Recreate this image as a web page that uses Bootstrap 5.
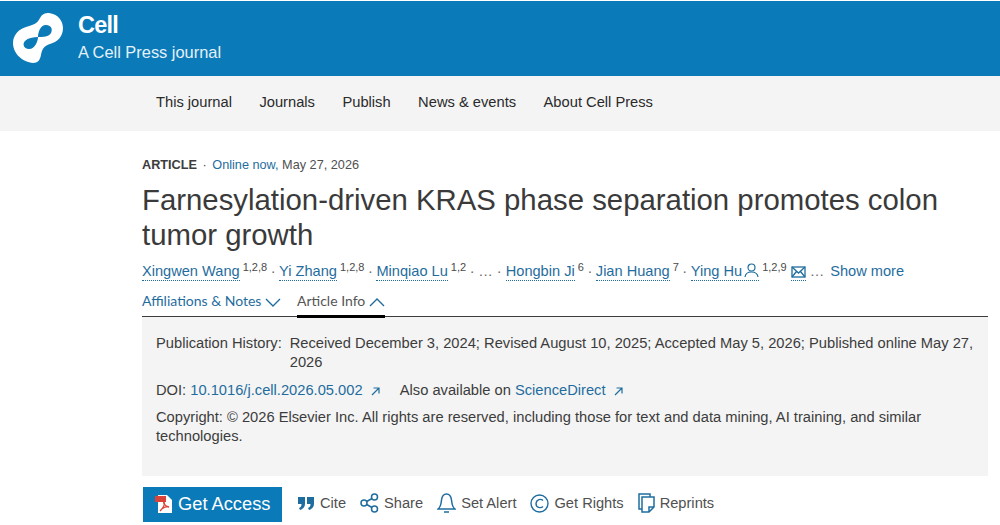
<!DOCTYPE html>
<html lang="en">
<head>
    <meta charset="UTF-8">
    <meta name="viewport" content="width=device-width, initial-scale=1.0">
    <title>Cell</title>
    <link href="https://cdn.jsdelivr.net/npm/bootstrap@5.3.3/dist/css/bootstrap.min.css" rel="stylesheet">
    <style>
        body {
            font-family: "Liberation Sans", Arial, sans-serif;
            color: #3c3c3c;
            overflow: hidden;
        }
        a { text-decoration: none; color: #1f6d9e; }
        .brand-bar {
            margin-top: 1px;
            height: 75px;
            background-color: #0a7ab8;
            color: #fff;
            padding-left: 13px;
            padding-bottom: 3px;
        }
        .brand-logo { width: 50px; height: 50px; margin-right: 15px; margin-top: 2px; }
        .brand-name { font-size: 23.5px; font-weight: 700; line-height: 28px; letter-spacing: -0.8px; margin-top: -2px; }
        .brand-sub { font-size: 16.4px; line-height: 20px; margin-top: 3px; color: #e4f1f8; }
        .site-nav {
            height: 55px;
            background-color: #f4f4f4;
            padding-left: 156px;
            padding-bottom: 3px;
            gap: 27.5px;
            font-size: 14.7px;
        }
        .site-nav a { color: #2a2a2a; }
        .page-main { padding: 26px 12px 0 142px; }
        .meta-line { font-size: 12.7px; line-height: 16px; color: #505050; }
        .meta-line b { color: #3c3c3c; }
        .meta-line a { color: #1f6d9e; }
        .dot-small { margin: 0 2px; }
        .article-title {
            font-size: 29.35px;
            line-height: 35px;
            font-weight: 400;
            margin: 9px 0 0;
            color: #3a3a3a;
        }
        .author-line { font-size: 14.6px; line-height: 20px; margin-top: 9px; color: #6a6a6a; white-space: nowrap; }
        .author-line a.person { border-bottom: 1px dotted #1f6d9e; height: 20px; }
        .author-line sup { font-size: 11px; line-height: 20px; color: #4a4a4a; top: -4px; margin-left: 3px; }
        .dot-sep { width: 12px; text-align: center; }
        .dots-gap { width: 13px; text-align: center; }
        .person-icon { margin-left: 2px; vertical-align: -2px; }
        .show-more { margin-left: 6px; }
        .tab-row { border-bottom: 1px solid #3c3c3c; margin-top: 10px; height: 26px; font-family: Lato, sans-serif; font-size: 14px; gap: 16px; }
        .tab-item { height: 26px; line-height: 20px; }
        .tab-open { color: #555; border-bottom: 3px solid #000; height: 27px; }
        .info-panel { background-color: #f4f4f4; height: 159px; padding: 17px 14px; font-size: 14.7px; line-height: 19px; color: #3c3c3c; }
        .info-panel p { margin: 0; }
        .history-label { flex: 0 0 auto; margin-right: 8px; }
        .doi-line { margin-top: 9px !important; }
        .also-text { margin-left: 16px; }
        .copyright-line { margin-top: 8px !important; }
        .action-row { margin-top: 11px; font-size: 14.65px; color: #505050; }
        .access-btn {
            display: flex;
            align-items: center;
            width: 139px;
            height: 35px;
            margin-left: 1px;
            background-color: #0a7ab8;
            color: #fff;
            font-size: 18.3px;
            padding-left: 11px;
            padding-bottom: 1px;
            gap: 4px;
        }
        .action-group { gap: 14px; margin-left: 15px; padding-bottom: 2px; }
        .action-item { display: flex; align-items: center; gap: 5px; color: #505050; }
    </style>
</head>
<body>
    <header class="brand-bar d-flex align-items-center">
        <svg class="brand-logo" viewBox="0 0 50 50">
            <path fill="#fff" fill-rule="evenodd" d="M36 0C45 1 50 8 50 15C50 24 44 29 37 31C31 33 29 36 28 42C27 47 25 50 20 50C10 49 0 41 0 30C0 22 6 16 13 14C20 12 24 11 27 5C29 1 32 0 36 0ZM25 24C25 20 27 12 33 12C38 12 40 16 38 20C36 24 30 24 25 24C25 28 22 36 16 36C11 36 9 31 12 28C15 25 20 24 25 24Z"/>
        </svg>
        <div>
            <div class="brand-name">Cell</div>
            <div class="brand-sub">A Cell Press journal</div>
        </div>
    </header>
    <nav class="site-nav d-flex align-items-center">
        <a href="#">This journal</a>
        <a href="#">Journals</a>
        <a href="#">Publish</a>
        <a href="#">News &amp; events</a>
        <a href="#">About Cell Press</a>
    </nav>
    <main class="page-main">
        <div class="meta-line"><b>ARTICLE</b> <span class="dot-small">·</span> <a href="#">Online now,</a> May 27, 2026</div>
        <h1 class="article-title">Farnesylation-driven KRAS phase separation promotes colon tumor growth</h1>
        <div class="author-line d-flex">
            <a class="person" href="#">Xingwen Wang</a><sup>1,2,8</sup><span class="dot-sep">·</span>
            <a class="person" href="#">Yi Zhang</a><sup>1,2,8</sup><span class="dot-sep">·</span>
            <a class="person" href="#">Minqiao Lu</a><sup>1,2</sup><span class="dot-sep">·</span>
            <span>…</span><span class="dots-gap">·</span>
            <a class="person" href="#">Hongbin Ji</a><sup>6</sup><span class="dot-sep">·</span>
            <a class="person" href="#">Jian Huang</a><sup>7</sup><span class="dot-sep">·</span>
            <a class="person" href="#">Ying Hu<svg class="person-icon" width="15" height="15" viewBox="0 0 15 15" fill="none" stroke="#1f6d9e" stroke-width="1.2"><circle cx="7.5" cy="4.5" r="3.5"/><path d="M1 14C1.5 10.5 4 9 7.5 9S13.5 10.5 14 14"/></svg></a><sup>1,2,9</sup>
            <a class="person ms-1" href="#"><svg width="15" height="13" viewBox="0 0 15 13" fill="none" stroke="#1f6d9e" stroke-width="1.3"><rect x="1" y="1" width="13" height="10"/><path d="M1 1L7.5 7L14 1M1 11L5.5 5.5M14 11L9.5 5.5"/></svg></a>
            <span class="ms-1">…</span>
            <a class="show-more" href="#">Show more</a>
        </div>
        <div class="tab-row d-flex">
            <a class="tab-item" href="#">Affiliations &amp; Notes <svg width="16" height="9" viewBox="0 0 16 9" fill="none" stroke="#1f6d9e" stroke-width="1.4"><path d="M1 1L8 8L15 1"/></svg></a>
            <a class="tab-item tab-open" href="#">Article Info <svg width="16" height="9" viewBox="0 0 16 9" fill="none" stroke="#1f6d9e" stroke-width="1.4"><path d="M1 8L8 1L15 8"/></svg></a>
        </div>
        <section class="info-panel">
            <div class="d-flex">
                <span class="history-label">Publication History:</span>
                <span>Received December 3, 2024; Revised August 10, 2025; Accepted May 5, 2026; Published online May 27, 2026</span>
            </div>
            <p class="doi-line">DOI: <a href="#">10.1016/j.cell.2026.05.002 <svg class="ms-1" width="9" height="9" viewBox="0 0 9 9" fill="none" stroke="#1f6d9e" stroke-width="1.2"><path d="M1 8L8 1M2.5 1H8V6.5"/></svg></a>
                <span class="also-text">Also available on</span> <a href="#">ScienceDirect <svg class="ms-1" width="9" height="9" viewBox="0 0 9 9" fill="none" stroke="#1f6d9e" stroke-width="1.2"><path d="M1 8L8 1M2.5 1H8V6.5"/></svg></a></p>
            <p class="copyright-line">Copyright: © 2026 Elsevier Inc. All rights are reserved, including those for text and data mining, AI training, and similar technologies.</p>
        </section>
        <div class="action-row d-flex align-items-center">
            <a class="access-btn" href="#">
                <svg width="20" height="20" viewBox="0 0 20 20"><path fill="#fff" d="M4 1H13L18 6V19H4Z"/><rect x="1" y="2" width="11" height="6" fill="#d9433a"/><path fill="none" stroke="#d9433a" stroke-width="1.3" d="M6 17C9 14 11 10 10 8C9 8 10 12 15 13C13 12 9 13 6 17Z"/></svg>
                Get Access
            </a>
            <div class="action-group d-flex align-items-center">
                <a class="action-item" href="#"><svg width="18" height="16" viewBox="0 0 18 16" fill="#1f6d9e"><path d="M1 2H8V9C8 12 6 14 3 15L2 13C4 12 4.5 11 4.5 9H1ZM10 2H17V9C17 12 15 14 12 15L11 13C13 12 13.5 11 13.5 9H10Z"/></svg>Cite</a>
                <a class="action-item" href="#"><svg width="19" height="20" viewBox="0 0 19 20" fill="none" stroke="#1f6d9e" stroke-width="1.5"><circle cx="14.5" cy="4" r="3"/><circle cx="4" cy="10" r="3"/><circle cx="14.5" cy="16" r="3"/><path d="M6.7 8.5L12 5.5M6.7 11.5L12 14.5"/></svg>Share</a>
                <a class="action-item" href="#"><svg width="19" height="21" viewBox="0 0 19 21" fill="none" stroke="#1f6d9e" stroke-width="1.5"><path d="M1 16C4 14 4 11 4.5 7C5 3 7 1 9.5 1S14 3 14.5 7C15 11 15 14 18 16Z"/><path d="M7 19H12"/></svg>Set Alert</a>
                <a class="action-item" href="#"><svg width="19" height="19" viewBox="0 0 19 19" fill="none" stroke="#1f6d9e" stroke-width="1.4"><circle cx="9.5" cy="9.5" r="8.5"/><path d="M13 6.5C11 4.5 6.5 5 6 9.5C6 14 11 14.5 13 12.5"/></svg>Get Rights</a>
                <a class="action-item" href="#"><svg width="17" height="20" viewBox="0 0 17 20" fill="none" stroke="#1f6d9e" stroke-width="1.5"><path d="M4 16H1V1H12V4"/><path d="M4 4H16V14L11 19H4Z"/><path d="M11 19V14H16"/></svg>Reprints</a>
            </div>
        </div>
    </main>
    <script src="https://cdn.jsdelivr.net/npm/bootstrap@5.3.3/dist/js/bootstrap.bundle.min.js"></script>
</body>
</html>
